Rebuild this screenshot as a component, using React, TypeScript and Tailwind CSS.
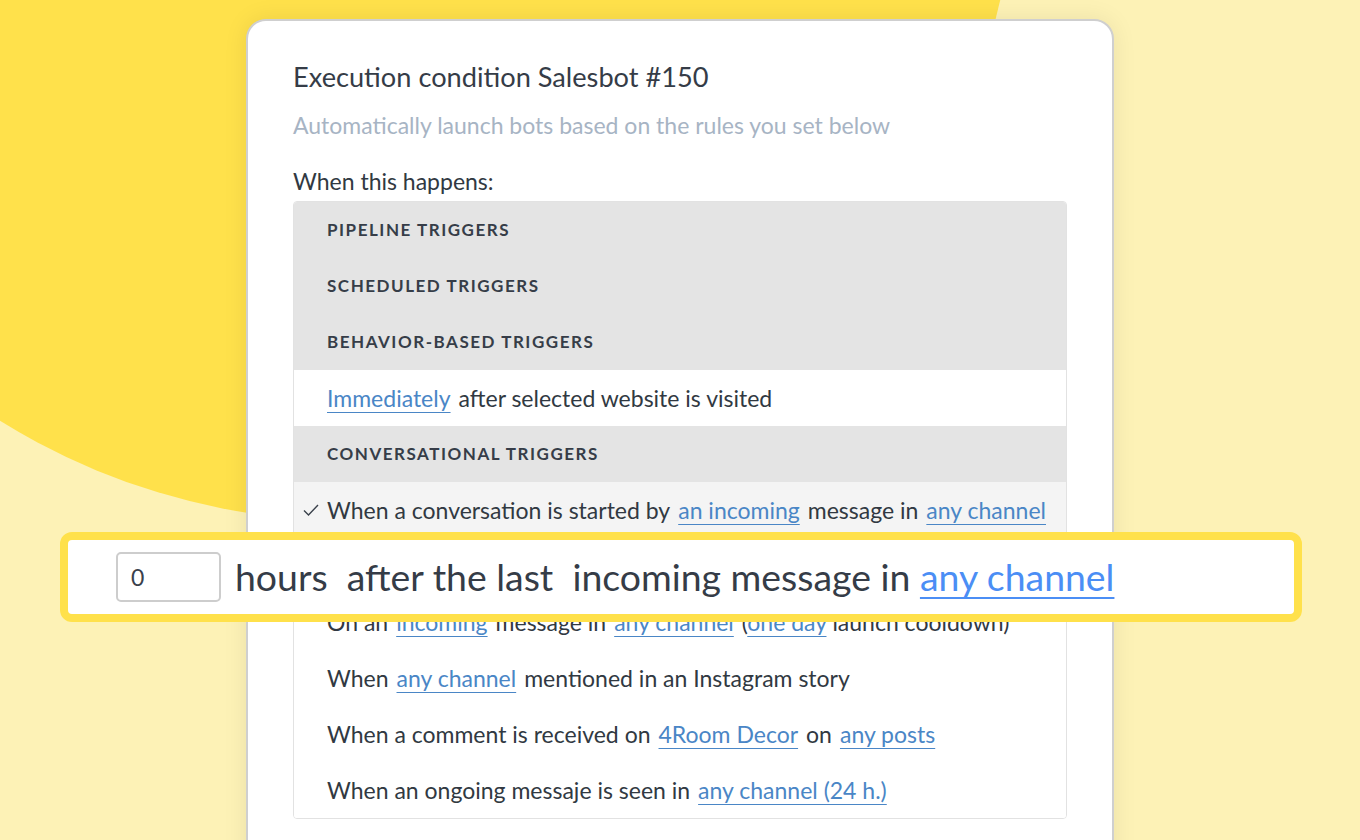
import React from 'react';

const font = { fontFamily: 'Lato, "Noto Sans", "Liberation Sans", sans-serif' };

function A({ children }: { children: React.ReactNode }) {
  return <span className="text-[#4a86c6] underline decoration-1 underline-offset-[5px]">{children}</span>;
}

function Header({ label }: { label: string }) {
  return (
    <div className="h-14 flex items-center pl-[33px] bg-[#e4e4e4] text-[17px] font-bold tracking-[0.09em] text-[#363d48] uppercase">
      {label}
    </div>
  );
}

function Item({ children, bg = 'bg-white', checked = false }: { children: React.ReactNode; bg?: string; checked?: boolean }) {
  return (
    <div className={`h-14 flex items-center pl-[33px] relative text-[23px] text-[#313942] ${bg}`}>
      {checked && (
        <svg className="absolute left-[9px] top-[22px]" width="16" height="12" viewBox="0 0 16 12" fill="none">
          <path d="M1 6.5l4.5 4.5L15 1" stroke="#3a414b" strokeWidth="1.4" />
        </svg>
      )}
      <div className="flex items-center gap-[8px] whitespace-nowrap">{children}</div>
    </div>
  );
}

export default function App() {
  return (
    <div className="relative w-[1360px] h-[840px] overflow-hidden bg-[#fdf2b6]" style={font}>
      {/* yellow circle */}
      <div className="absolute left-[-314px] top-[-809px] w-[1330px] h-[1330px] rounded-full bg-[#ffe14b]" />

      {/* card */}
      <div className="relative ml-[246px] mt-[19px] w-[868px] h-[900px] bg-white border-2 border-[#cfcfcf] rounded-[20px] shadow-[0_0_24px_rgba(0,0,0,0.08)] px-[45px] pt-[40px]">
        <h1 className="text-[27.2px] leading-8 text-[#353c47]">Execution condition Salesbot #150</h1>
        <p className="mt-[18px] text-[23px] leading-7 text-[#a7b4c4]">Automatically launch bots based on the rules you set below</p>
        <p className="mt-[28px] text-[23px] leading-7 text-[#313942]">When this happens:</p>

        <div className="mt-[6px] w-[774px] border border-[#e2e2e2] rounded-[4px] overflow-hidden">
          <Header label="Pipeline triggers" />
          <Header label="Scheduled triggers" />
          <Header label="Behavior-based triggers" />
          <Item>
            <A>Immediately</A>
            <span>after selected website is visited</span>
          </Item>
          <Header label="Conversational triggers" />
          <Item bg="bg-[#f4f4f4]" checked>
            <span>When a conversation is started by</span>
            <A>an incoming</A>
            <span>message in</span>
            <A>any channel</A>
          </Item>
          {/* row hidden under the zoomed highlight */}
          <div className="h-14 bg-white" />
          <Item>
            <span>On an</span>
            <A>incoming</A>
            <span>message in</span>
            <A>any channel</A>
            <span>
              (<A>one day</A> launch cooldown)
            </span>
          </Item>
          <Item>
            <span>When</span>
            <A>any channel</A>
            <span>mentioned in an Instagram story</span>
          </Item>
          <Item>
            <span>When a comment is received on</span>
            <A>4Room Decor</A>
            <span>on</span>
            <A>any posts</A>
          </Item>
          <Item>
            <span>When an ongoing messaje is seen in</span>
            <A>any channel (24 h.)</A>
          </Item>
        </div>
      </div>

      {/* zoomed highlight row */}
      <div className="absolute left-[60px] top-[532px] w-[1242px] h-[90px] bg-white border-[8px] border-[#ffe14b] rounded-[12px] flex items-center pl-[48px]">
        <div className="w-[105px] h-[50px] border-2 border-[#cdcdcd] rounded-[5px] flex items-center pl-[13px] text-[23px] text-[#3a414b]">0</div>
        <div className="ml-[14px] text-[37.4px] leading-[44px] text-[#353c47] whitespace-pre">
          hours  after the last  incoming message in{' '}
          <span className="text-[#4b8ef5] underline decoration-[1.5px] underline-offset-[6px]">any channel</span>
        </div>
      </div>
    </div>
  );
}
